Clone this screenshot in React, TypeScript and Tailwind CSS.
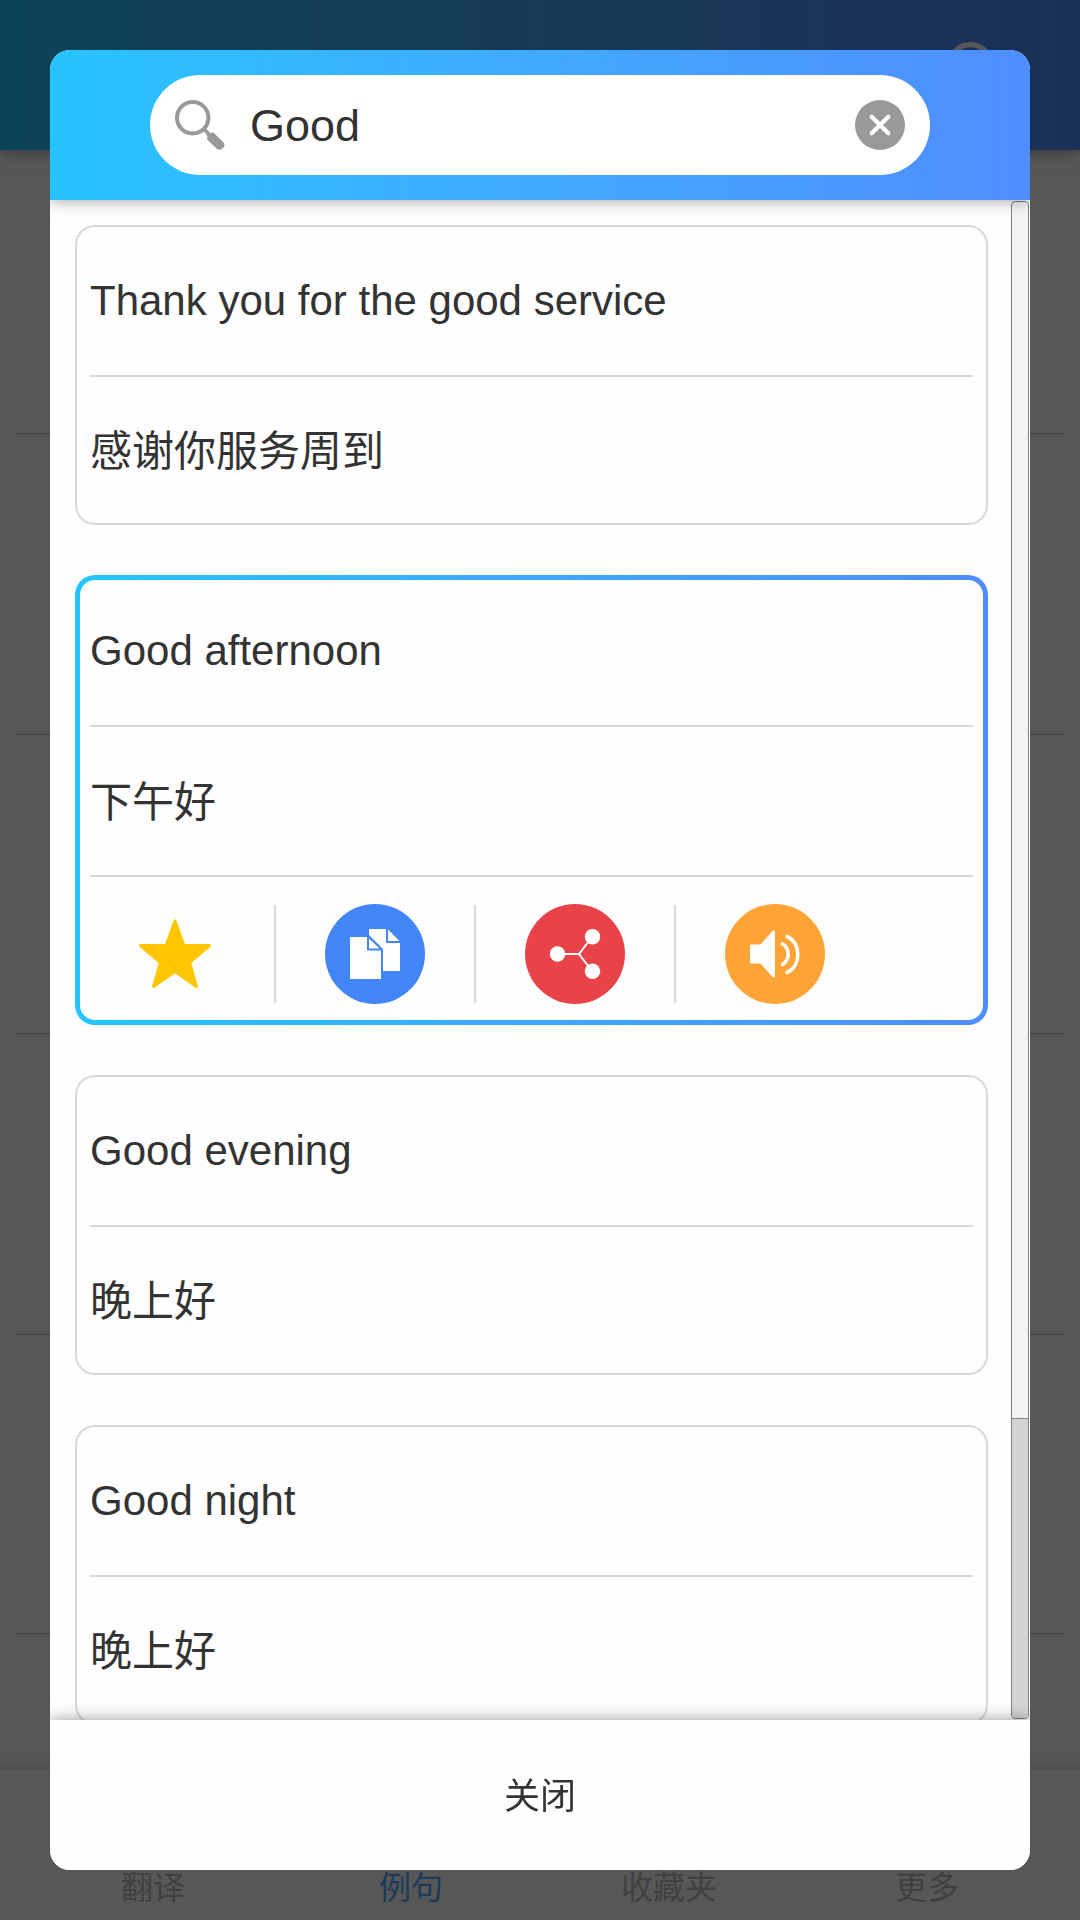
import React, { useState } from 'react';

type Phrase = { id: number; source: string; target: string };

const PHRASES: Phrase[] = [
  { id: 1, source: 'Thank you for the good service', target: '感谢你服务周到' },
  { id: 2, source: 'Good afternoon', target: '下午好' },
  { id: 3, source: 'Good evening', target: '晚上好' },
  { id: 4, source: 'Good night', target: '晚上好' },
];

const TABS = ['翻译', '例句', '收藏夹', '更多'];

const SearchIcon: React.FC<{ className?: string }> = ({ className }) => (
  <svg viewBox="0 0 50 50" className={className} fill="none" stroke="currentColor" aria-hidden="true">
    <circle cx="17.7" cy="17.7" r="15.7" strokeWidth="4" />
    <path d="M28 28l7 7.500" strokeWidth="4" />
    <path d="M32 35Q33 34.500 34.500 33.800Q37 31.500 39 33L48.500 42.500Q50.500 45 48.500 47.500Q45.500 51 42 49L32.500 40Q31.500 38.500 32.500 37.500Z" fill="currentColor" stroke="none" />
  </svg>
);

const ClearIcon = () => (
  <svg viewBox="0 0 50 50" className="size-[50px]" aria-hidden="true">
    <circle cx="25" cy="25" r="25" fill="#999" />
    <path d="M16.700 16.700l16.600 16.600M33.300 16.700l-16.600 16.600" stroke="#fff" strokeWidth="4.200" strokeLinecap="round" />
  </svg>
);

const StarIcon = () => (
  <svg viewBox="0 0 100 100" className="size-[100px]" aria-hidden="true">
    <path
      d="M50 17L58.800 41.500H84.500L64.500 58.500L71.500 82.500L50 67.500L28.500 82.500L35.500 58.500L15.500 41.500H41.200Z"
      fill="#ffc600"
      stroke="#ffc600"
      strokeWidth="3"
      strokeLinejoin="round"
    />
  </svg>
);

const CopyIcon = () => (
  <svg viewBox="0 0 100 100" className="size-[100px]" aria-hidden="true">
    <circle cx="50" cy="50" r="50" fill="#4285f4" />
    <path d="M44 25H61V39H75V67H58V45L44 31Z" fill="#fff" />
    <path d="M63 25.500L74.500 37H63Z" fill="#fff" />
    <path d="M25 33H42V46.500H56V75H25Z" fill="#fff" />
    <path d="M44 34.500L54.500 44.500H44Z" fill="#fff" />
  </svg>
);

const ShareIcon = () => (
  <svg viewBox="0 0 100 100" className="size-[100px]" aria-hidden="true">
    <circle cx="50" cy="50" r="50" fill="#e84348" />
    <path d="M32 50H54L67 33M54 50L67 67" fill="none" stroke="#fff" strokeWidth="2" />
    <circle cx="32.500" cy="50" r="7.700" fill="#fff" />
    <circle cx="67.500" cy="32.700" r="7.700" fill="#fff" />
    <circle cx="67.500" cy="67.300" r="7.700" fill="#fff" />
  </svg>
);

const SpeakIcon = () => (
  <svg viewBox="0 0 100 100" className="size-[100px]" aria-hidden="true">
    <circle cx="50" cy="50" r="50" fill="#fea336" />
    <path
      d="M26 40.500H35.500L47.500 27Q49 26 50 27.500V72.500Q49 74 47.500 73L35.500 59.500H26Q25 59.500 25 58.500V41.500Q25 40.500 26 40.500Z"
      fill="#fff"
    />
    <path d="M57.500 40C65 44.500 65 56 57.500 60.500M62 32.500C76.500 39 76.500 62 62 68.500" fill="none" stroke="#fff" strokeWidth="3.600" strokeLinecap="round" />
  </svg>
);

const ACTIONS = [
  { label: '收藏', icon: <StarIcon /> },
  { label: '复制', icon: <CopyIcon /> },
  { label: '分享', icon: <ShareIcon /> },
  { label: '朗读', icon: <SpeakIcon /> },
];

const PhraseCard: React.FC<{ phrase: Phrase; active: boolean; onSelect: () => void }> = ({ phrase, active, onSelect }) => (
  <li
    onClick={onSelect}
    className={
      active
        ? 'rounded-[20px] border-5 border-transparent px-[10px] [background:linear-gradient(#fefefe,#fefefe)_padding-box,linear-gradient(to_right,#25c4ff,#4f8dff)_border-box]'
        : 'rounded-[20px] border-2 border-[#d9d9d9] px-[13px]'
    }
  >
    <p className={`flex items-center ${active ? 'min-h-[145px] pb-[3px]' : 'min-h-[148px]'}`}>{phrase.source}</p>
    <p className={`flex items-center border-t-2 border-[#d9d9d9] pt-1 ${active ? 'min-h-[150px]' : 'min-h-[148px]'}`}>{phrase.target}</p>
    {active && (
      <div className="flex items-center gap-[50px] border-t-2 border-[#d9d9d9] pt-[27px] pb-4 pl-[35px]">
        {ACTIONS.map((a, i) => (
          <React.Fragment key={a.label}>
            {i > 0 && <span className="-mx-px h-[98px] w-[2px] bg-[#d9d9d9]" />}
            <button type="button" aria-label={a.label} className="shrink-0">{a.icon}</button>
          </React.Fragment>
        ))}
      </div>
    )}
  </li>
);

const PageBehind = () => (
  <div className="flex min-h-screen flex-col bg-[#fefefe]">
    <div className="z-10 flex h-[150px] items-center justify-end bg-linear-to-r from-[#25c4ff] to-[#4f8dff] pr-[67px] shadow-[0_0_15px_rgba(0,0,0,0.5)]">
      <SearchIcon className="size-[66px] text-white" />
    </div>
    <div className="flex-1 px-[15px]">
      {[0, 1, 2, 3, 4].map(i => (
        <div key={i} className={`border-b-2 border-[#d9d9d9] ${i === 0 ? 'h-[285px]' : 'h-[300px]'}`} />
      ))}
    </div>
    <nav className="flex h-[150px] items-end px-6 pb-4 shadow-[0_0_15px_rgba(0,0,0,0.2)]">
      {TABS.map(tab => (
        <a key={tab} href="#" className={`flex-1 text-center text-[32px] leading-[32px] ${tab === '例句' ? 'text-[#4facff]' : 'text-[#bbb]'}`}>{tab}</a>
      ))}
    </nav>
  </div>
);

export default function App() {
  const [query, setQuery] = useState('Good');
  const [selected, setSelected] = useState(2);

  return (
    <div className="font-['Liberation_Sans','Noto_Sans_CJK_SC',sans-serif] text-[#333]">
      <PageBehind />
      <div className="fixed inset-0 z-20 flex bg-black/66 p-[50px]">
        <div role="dialog" aria-label="搜索" className="flex min-h-0 flex-1 flex-col overflow-hidden rounded-[20px] bg-[#fefefe]">
          <div className="z-10 bg-linear-to-r from-[#25c4ff] to-[#4f8dff] px-[100px] py-[25px] shadow-[0_0_15px_rgba(0,0,0,0.4)]">
            <label className="flex h-[100px] items-center gap-[25px] rounded-full bg-white px-[25px]">
              <SearchIcon className="size-[50px] shrink-0 text-[#999]" />
              <input
                type="text"
                aria-label="搜索"
                value={query}
                onChange={e => setQuery(e.target.value)}
                className="min-w-0 flex-1 bg-transparent pt-[2px] text-[45px] leading-[52px] outline-none"
              />
              <button type="button" aria-label="清除" onClick={() => setQuery('')} className="shrink-0"><ClearIcon /></button>
            </label>
          </div>
          <div className="flex min-h-0 flex-1">
            <ul className="flex flex-1 flex-col gap-[50px] overflow-hidden py-[25px] pr-[23px] pl-[25px] text-[42px] leading-[50px] *:shrink-0">
              {PHRASES.map(p => (
                <PhraseCard key={p.id} phrase={p} active={p.id === selected} onSelect={() => setSelected(p.id)} />
              ))}
            </ul>
            <div className="my-px mr-px flex w-[18px] flex-col justify-end rounded-[4px] border border-[#808080] bg-[#f4f4f4]">
              <div className="h-[300px] rounded-b-[3px] border-t border-[#808080] bg-[#d4d4d4]" />
            </div>
          </div>
          <button
            type="button"
            className="z-10 h-[150px] shrink-0 bg-[#fefefe] pt-1 text-[36px] shadow-[0_0_15px_rgba(0,0,0,0.4)]"
          >
            关闭
          </button>
        </div>
      </div>
    </div>
  );
}
